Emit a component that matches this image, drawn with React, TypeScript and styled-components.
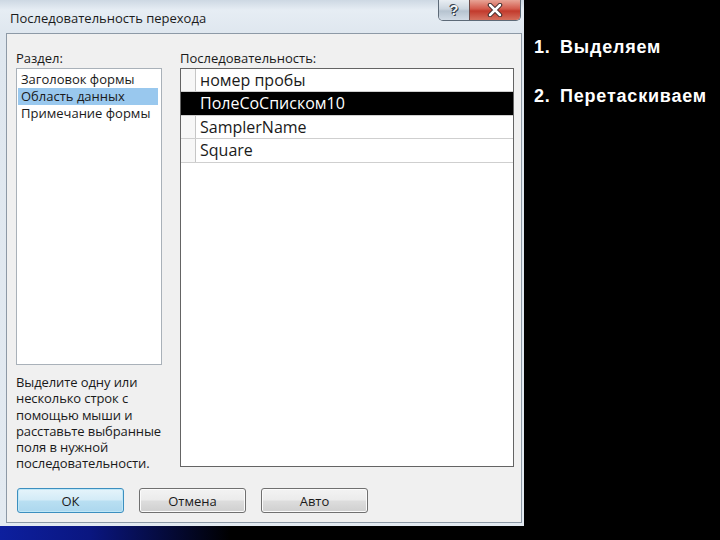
import React from "react";
import styled, { createGlobalStyle } from "styled-components";

const Global = createGlobalStyle`
  html, body { margin: 0; padding: 0; background: #000; }
  body { width: 720px; height: 540px; overflow: hidden; }
  * { box-sizing: border-box; }
`;

const Page = styled.div`
  width: 720px;
  height: 540px;
  display: flex;
  flex-direction: column;
  background: #000;
`;

const TopArea = styled.div`
  display: flex;
  height: 526px;
  flex-shrink: 0;
`;

const BottomStrip = styled.div`
  flex: 1;
  background: linear-gradient(90deg, #0d1f9e 0px, #0a1680 90px, #000 230px);
`;

const Window = styled.div`
  width: 524px;
  flex-shrink: 0;
  display: flex;
  flex-direction: column;
  background: linear-gradient(180deg, #cdd8e3 0px, #e6edf4 10px, #dfe7ef 33px, #e3eaf1 100%);
`;

const TitleBar = styled.div`
  height: 33px;
  flex-shrink: 0;
  display: flex;
  align-items: flex-start;
  padding-left: 10px;
  padding-right: 3px;
`;

const TitleText = styled.div`
  flex: 1;
  padding-top: 10px;
  font-family: "Open Sans", "Liberation Sans", sans-serif;
  font-size: 13px;
  line-height: 16px;
  color: #1b1b1b;
`;

const CaptionGroup = styled.div`
  display: flex;
  border: 1px solid #5d6a78;
  border-top: none;
  border-radius: 0 0 5px 5px;
  overflow: hidden;
  height: 21px;
`;

const CaptionButton = styled.div<{ $close?: boolean; $w: number }>`
  width: ${(p) => p.$w}px;
  height: 20px;
  display: flex;
  align-items: center;
  justify-content: center;
  background: ${(p) =>
    p.$close
      ? "linear-gradient(180deg, #e8a496 0%, #d2594a 45%, #c23a2c 55%, #d5705e 100%)"
      : "linear-gradient(180deg, #e9eef3 0%, #cbd5df 45%, #b6c3d0 55%, #d2dce6 100%)"};
  border-left: ${(p) => (p.$close ? "1px solid #6b4a48" : "none")};
  font-family: "Liberation Sans", sans-serif;
  font-weight: bold;
  font-size: 14px;
  color: #f4f6f8;
  text-shadow: 0 0 1px #2a3440, 1px 1px 0 #3a4450, -1px -1px 0 #3a4450;
`;

const FrameBody = styled.div`
  flex: 1;
  min-height: 0;
  display: flex;
  padding: 0 2px 3px 6px;
`;

const Content = styled.div`
  flex: 1;
  background: #f0f0f0;
  border: 1px solid #8d99a6;
  display: flex;
  flex-direction: column;
  padding: 16px 7px 8px 9px;
  font-family: "Open Sans", "Liberation Sans", sans-serif;
  font-size: 13px;
  color: #1a1a1a;
`;

const Main = styled.div`
  height: 417px;
  display: flex;
  gap: 18px;
`;

const Column = styled.div<{ $w?: number }>`
  display: flex;
  flex-direction: column;
  ${(p) => (p.$w ? `width: ${p.$w}px;` : "flex: 1;")}
`;

const Label = styled.div`
  height: 16px;
  line-height: 16px;
  margin-bottom: 2px;
`;

const ListBox = styled.div`
  height: 297px;
  flex-shrink: 0;
  background: #fff;
  border: 1px solid #a9b1b9;
  padding: 2px 3px 0 1px;
  display: flex;
  flex-direction: column;
`;

const ListItem = styled.div<{ $sel?: boolean }>`
  height: 17px;
  line-height: 17px;
  padding-left: 3px;
  background: ${(p) => (p.$sel ? "#99c8ee" : "transparent")};
  white-space: nowrap;
`;

const Hint = styled.div`
  margin-top: 9px;
  line-height: 16.3px;
  white-space: nowrap;
  letter-spacing: -0.1px;
`;

const Grid = styled.div`
  height: 399px;
  flex-shrink: 0;
  background: #fff;
  border: 1px solid #646464;
  display: flex;
  flex-direction: column;
`;

const GridRow = styled.div<{ $sel?: boolean }>`
  height: 23.4px;
  flex-shrink: 0;
  display: flex;
  border-bottom: 1px solid #cfcfcf;
  background: ${(p) => (p.$sel ? "#000" : "#fff")};
  color: ${(p) => (p.$sel ? "#fff" : "#1a1a1a")};
`;

const Selector = styled.div<{ $sel?: boolean }>`
  width: 15px;
  border-right: 1px solid ${(p) => (p.$sel ? "#000" : "#c6c6c6")};
  background: ${(p) => (p.$sel ? "#000" : "#f7f7f7")};
`;

const Cell = styled.div`
  flex: 1;
  padding-left: 4px;
  font-size: 16px;
  line-height: 23px;
  white-space: nowrap;
`;

const ButtonRow = styled.div`
  margin-top: 21px;
  display: flex;
  gap: 15px;
  padding-left: 1px;
`;

const DialogButton = styled.div<{ $default?: boolean }>`
  width: 107px;
  height: 25px;
  display: flex;
  align-items: center;
  justify-content: center;
  border-radius: 3px;
  border: 1px solid ${(p) => (p.$default ? "#3c8fbf" : "#707070")};
  box-shadow: inset 0 0 0 1px ${(p) => (p.$default ? "#bfe7f7" : "#fbfbfb")};
  background: ${(p) =>
    p.$default
      ? "linear-gradient(180deg, #e5f4fb 0%, #d3ebf7 48%, #b9dff2 52%, #acd7ee 100%)"
      : "linear-gradient(180deg, #f3f3f3 0%, #ebebeb 48%, #dddddd 52%, #cfcfcf 100%)"};
  font-size: 13px;
  color: #1a1a1a;
`;

const Notes = styled.ol`
  list-style: none;
  margin: 0;
  padding: 36px 0 0 10px;
  display: flex;
  flex-direction: column;
  gap: 27px;
  font-family: "Liberation Sans", Arial, sans-serif;
  font-weight: bold;
  font-size: 18px;
  letter-spacing: 0.8px;
  line-height: 22px;
  color: #fff;
`;

const Note = styled.li`
  display: flex;
  white-space: nowrap;
`;

const NoteNum = styled.span`
  width: 26px;
`;

const rows = ["номер пробы", "ПолеСоСписком10", "SamplerName", "Square"];

export default function App() {
  return (
    <>
      <Global />
      <Page>
        <TopArea>
          <Window>
            <TitleBar>
              <TitleText>Последовательность перехода</TitleText>
              <CaptionGroup>
                <CaptionButton $w={30}>?</CaptionButton>
                <CaptionButton $close $w={51}>
                  <svg width="16" height="14" viewBox="0 0 16 14">
                    <path
                      d="M3 2 L13 12 M13 2 L3 12"
                      stroke="#3a2a2a"
                      strokeWidth="4.5"
                      strokeLinecap="round"
                    />
                    <path
                      d="M3 2 L13 12 M13 2 L3 12"
                      stroke="#fff"
                      strokeWidth="2.5"
                      strokeLinecap="round"
                    />
                  </svg>
                </CaptionButton>
              </CaptionGroup>
            </TitleBar>
            <FrameBody>
              <Content>
                <Main>
                  <Column $w={146}>
                    <Label>Раздел:</Label>
                    <ListBox>
                      <ListItem>Заголовок формы</ListItem>
                      <ListItem $sel>Область данных</ListItem>
                      <ListItem>Примечание формы</ListItem>
                    </ListBox>
                    <Hint>
                      Выделите одну или
                      <br />
                      несколько строк с
                      <br />
                      помощью мыши и
                      <br />
                      расставьте выбранные
                      <br />
                      поля в нужной
                      <br />
                      последовательности.
                    </Hint>
                  </Column>
                  <Column>
                    <Label>Последовательность:</Label>
                    <Grid>
                      {rows.map((r, i) => (
                        <GridRow key={r} $sel={i === 1}>
                          <Selector $sel={i === 1} />
                          <Cell>{r}</Cell>
                        </GridRow>
                      ))}
                    </Grid>
                  </Column>
                </Main>
                <ButtonRow>
                  <DialogButton $default>ОК</DialogButton>
                  <DialogButton>Отмена</DialogButton>
                  <DialogButton>Авто</DialogButton>
                </ButtonRow>
              </Content>
            </FrameBody>
          </Window>
          <Notes>
            <Note>
              <NoteNum>1.</NoteNum>Выделяем
            </Note>
            <Note>
              <NoteNum>2.</NoteNum>Перетаскиваем
            </Note>
          </Notes>
        </TopArea>
        <BottomStrip />
      </Page>
    </>
  );
}
